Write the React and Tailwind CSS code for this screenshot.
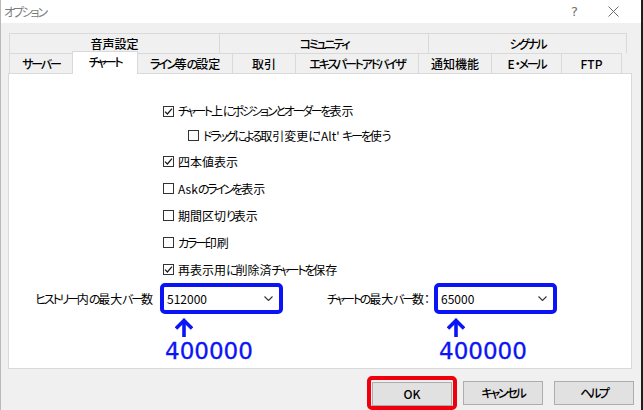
import React from "react";

function J({ children }) {
  const parts = String(children).split(/([\u3040-\u30ff\uff65]+)/);
  return parts.map((p, i) =>
    /[\u3040-\u30ff\uff65]/.test(p) ? (
      <span key={i} className="tracking-[-2.2px]">
        {p}
      </span>
    ) : (
      <React.Fragment key={i}>{p}</React.Fragment>
    )
  );
}

function Check({ checked }) {
  return (
    <span className="w-[11px] h-[11px] border border-[#333333] bg-white flex items-center justify-center shrink-0">
      {checked && (
        <svg width="9" height="9" viewBox="0 0 9 9">
          <path d="M1 4.6 L3.4 7 L8 1.6" fill="none" stroke="#1a1a1a" strokeWidth="1.3" />
        </svg>
      )}
    </span>
  );
}

function Row({ checked, label, indent, h }) {
  return (
    <div className={`flex items-center gap-[4px] ${h} ${indent ? "ml-[25px]" : ""}`}>
      <Check checked={checked} />
      <span className="text-[12px] text-black leading-none whitespace-nowrap">
        <J>{label}</J>
      </span>
    </div>
  );
}

function Combo({ value }) {
  return (
    <div className="w-[123px] h-[31px] border-[4px] border-[#0a14f5] rounded-[5px] bg-white flex items-center pl-[3px] pr-[6px]">
      <span className="text-[12px] text-black leading-none">{value}</span>
      <svg className="ml-auto" width="9" height="5" viewBox="0 0 9 5">
        <path d="M0.5 0.5 L4.5 4.5 L8.5 0.5" fill="none" stroke="#333" strokeWidth="1.1" />
      </svg>
    </div>
  );
}

function Arrow({ className }) {
  return (
    <svg className={className} width="20" height="20" viewBox="0 0 20 20">
      <path d="M10 19 L10 3" stroke="#0a14f5" strokeWidth="3.6" fill="none" />
      <path d="M2 10.5 L10 2.5 L18 10.5" stroke="#0a14f5" strokeWidth="3.6" fill="none" strokeLinejoin="miter" />
    </svg>
  );
}

function Big() {
  return (
    <div className="ml-[5px] mt-[2px] h-[25px] leading-none text-[23px] text-[#0a14f5] font-['DejaVu_Sans',sans-serif] [font-feature-settings:normal] [-webkit-text-stroke:0.3px_#0a14f5]">
      400000
    </div>
  );
}

const row1 = [
  ["音声設定", "w-[211px]"],
  ["コミュニティ", "w-[210px]"],
  ["シグナル", "w-[199px]"],
];

const row2 = [
  ["サーバー", "w-[64px]"],
  ["チャート", "w-[66px]", true],
  ["ライン等の設定", "w-[96px]"],
  ["取引", "w-[64px]"],
  ["エキスパートアドバイザ", "w-[124px]"],
  ["通知機能", "w-[74px]"],
  ["E・メール", "w-[71px]"],
  ["FTP", "w-[61px]"],
];

export default function App() {
  return (
    <div className="w-[643px] h-[410px] bg-[#f0f0f0] overflow-hidden flex flex-col border-l border-[#b9b9b9] border-r-2 border-r-[#1e1e1e] text-black font-['Noto_Sans_CJK_JP','Noto_Sans',sans-serif] [font-feature-settings:'palt']">
      {/* title bar */}
      <div className="h-[23px] bg-white flex items-center pl-[3px] shrink-0">
        <span className="text-[12px] leading-none text-[#7c7c7c]">
          <J>オプション</J>
        </span>
        <span className="ml-auto text-[13px] leading-none text-[#6e6e6e] font-['DejaVu_Sans',sans-serif]">?</span>
        <svg className="ml-[30px] mr-[22px]" width="11" height="11" viewBox="0 0 11 11">
          <path d="M0.5 0.5 L10.5 10.5 M10.5 0.5 L0.5 10.5" stroke="#6e6e6e" strokeWidth="1" />
        </svg>
      </div>

      <div className="pl-[7px] pt-[10px] flex flex-col">
        {/* tab row 1 */}
        <div className="flex ml-[1px] h-[20px]">
          {row1.map(([t, w]) => (
            <div
              key={t}
              className={`${w} h-[20px] border-t border-l border-r border-[#d9d9d9] -mr-[1px] flex items-center justify-center text-[12px] font-medium leading-none`}
            >
              <span>
                <J>{t}</J>
              </span>
            </div>
          ))}
        </div>
        {/* tab row 2 */}
        <div className="flex items-end ml-[1px] h-[20px]">
          {row2.map(([t, w, sel]) =>
            sel ? (
              <div
                key={t}
                className={`${w} h-[23px] -mb-[1px] bg-white border-t border-l border-r border-[#d9d9d9] -mr-[1px] relative z-10 flex items-center justify-center text-[12px] font-medium leading-none pb-[3px]`}
              >
                <span>
                  <J>{t}</J>
                </span>
              </div>
            ) : (
              <div
                key={t}
                className={`${w} h-[20px] border-t border-l border-r border-[#d9d9d9] -mr-[1px] flex items-center justify-center text-[12px] font-medium leading-none`}
              >
                <span>
                  <J>{t}</J>
                </span>
              </div>
            )
          )}
        </div>

        {/* panel */}
        <div className="w-[624px] h-[296px] bg-white border border-[#d9d9d9] flex flex-col">
          <div className="ml-[154px] mt-[25px] flex flex-col">
            <Row checked label="チャート上にポジションとオーダーを表示" h="h-[24px]" />
            <Row indent label="ドラッグによる取引変更に'Alt' キーを使う" h="h-[25px]" />
            <Row checked label="四本値表示" h="h-[27px]" />
            <Row label="Askのラインを表示" h="h-[27px]" />
            <Row label="期間区切り表示" h="h-[27px]" />
            <Row label="カラー印刷" h="h-[27px]" />
            <Row checked label="再表示用に削除済チャートを保存" h="h-[27px]" />
          </div>
          <div className="flex">
            <div className="w-[144px] h-[31px] flex items-center justify-end text-[12px] leading-none whitespace-nowrap">
              <span>
                <J>ヒストリー内の最大バー数</J>
              </span>
            </div>
            <div className="ml-[7px] w-[123px] flex flex-col">
              <Combo value="512000" />
              <Arrow className="ml-[14px] mt-[4px]" />
              <Big />
            </div>
            <div className="ml-[7px] w-[140px] h-[31px] flex items-center justify-end text-[12px] leading-none whitespace-nowrap">
              <span>
                <J>チャートの最大バー数</J>：
              </span>
            </div>
            <div className="ml-[4px] w-[123px] flex flex-col">
              <Combo value="65000" />
              <Arrow className="ml-[12px] mt-[4px]" />
              <Big />
            </div>
          </div>
        </div>

        {/* buttons */}
        <div className="flex items-center justify-end mt-[7px] w-[626px]">
          <div className="border-[4px] border-[#f0000c] rounded-[5px] px-[1px]">
            <button className="w-[80px] h-[24px] bg-[#e1e1e1] border border-[#adadad] text-[12px] font-medium leading-none">
              OK
            </button>
          </div>
          <button className="ml-[6px] w-[80px] h-[24px] bg-[#e1e1e1] border border-[#adadad] text-[12px] font-medium leading-none">
            <J>キャンセル</J>
          </button>
          <button className="ml-[11px] w-[80px] h-[24px] bg-[#e1e1e1] border border-[#adadad] text-[12px] font-medium leading-none">
            <J>ヘルプ</J>
          </button>
        </div>
      </div>
    </div>
  );
}
